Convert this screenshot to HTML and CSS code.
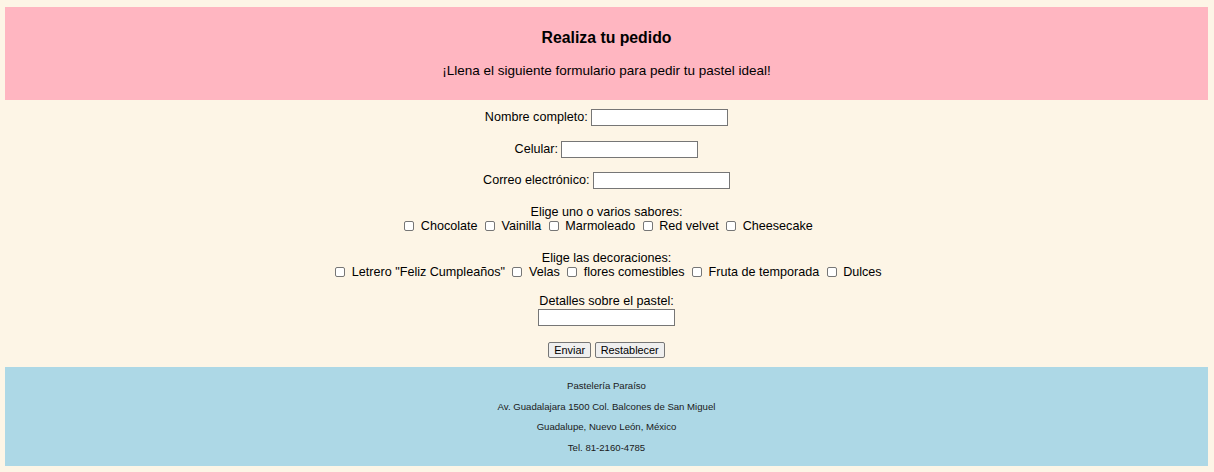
FILE: index.html
```html
<!DOCTYPE html>
<html lang="es">
<head>
<meta charset="utf-8">
<title>Realiza tu pedido</title>
<link rel="stylesheet" href="styles.css">
</head>
<body>
<header class="banner">
  <h3 class="banner-title">Realiza tu pedido</h3>
  <p class="banner-text">¡Llena el siguiente formulario para pedir tu pastel ideal!</p>
</header>
<form class="order">
  <div class="row row-first"><label>Nombre completo:</label> <input class="text" type="text"></div>
  <div class="row"><label>Celular:</label> <input class="text" type="text"></div>
  <div class="row"><label>Correo electrónico:</label> <input class="text" type="text"></div>
  <div class="group group-flavors">
    <div class="group-label">Elige uno o varios sabores:</div>
    <div class="group-options"><input class="check" type="checkbox"> Chocolate <input class="check" type="checkbox"> Vainilla <input class="check" type="checkbox"> Marmoleado <input class="check" type="checkbox"> Red velvet <input class="check" type="checkbox"> Cheesecake</div>
  </div>
  <div class="group group-decor">
    <div class="group-label">Elige las decoraciones:</div>
    <div class="group-options"><input class="check" type="checkbox"> Letrero "Feliz Cumpleaños" <input class="check" type="checkbox"> Velas <input class="check" type="checkbox"> flores comestibles <input class="check" type="checkbox"> Fruta de temporada <input class="check" type="checkbox"> Dulces</div>
  </div>
  <div class="details">
    <div class="group-label">Detalles sobre el pastel:</div>
    <div class="row"><input class="text" type="text"></div>
  </div>
  <div class="row actions"><button class="btn" type="submit">Enviar</button> <button class="btn" type="reset">Restablecer</button></div>
</form>
<footer class="site-footer">
  <p>Pastelería Paraíso</p>
  <p>Av. Guadalajara 1500 Col. Balcones de San Miguel</p>
  <p>Guadalupe, Nuevo León, México</p>
  <p>Tel. 81-2160-4785</p>
</footer>
</body>
</html>
```
FILE: styles.css
```css
html {
  background: #fdf5e6;
}
body {
  margin: 7px 6px 6px 5px;
  background: #fdf5e6;
  font-family: "Liberation Sans", Arial, sans-serif;
  color: #000;
}
.banner {
  background: #ffb6c1;
  text-align: center;
  height: 93px;
  overflow: hidden;
}
.banner-title {
  margin: 22px 0 0;
  font-size: 15.8px;
  line-height: 18px;
  font-weight: bold;
}
.banner-text {
  margin: 16px 0 0;
  font-size: 13.5px;
  line-height: 16px;
}
.order {
  text-align: center;
  font-size: 12.6px;
  line-height: 14px;
  padding: 9px 0 9px;
}
.row {
  height: 17px;
  line-height: 17px;
  margin-top: 14.5px;
}
.row-first {
  margin-top: 0;
}
.text {
  box-sizing: border-box;
  width: 137px;
  height: 17px;
  margin: 0;
  padding: 0 2px;
  border: 1px solid #767676;
  border-radius: 0;
  background: #fff;
  vertical-align: top;
  font: inherit;
}
.group {
  margin-top: 16px;
}
.group-decor {
  margin-top: 18px;
}
.group-label,
.group-options {
  height: 14px;
  line-height: 14px;
}
.check {
  -webkit-appearance: none;
  appearance: none;
  box-sizing: border-box;
  width: 10px;
  height: 10px;
  margin: 0 3px 0 4px;
  border: 1px solid #767676;
  border-radius: 2px;
  background: #fff;
  vertical-align: -1px;
}
.details {
  margin-top: 15px;
}
.details .row {
  margin-top: 1px;
}
.actions {
  margin-top: 15.5px;
  height: 16px;
  line-height: 16px;
}
.btn {
  box-sizing: border-box;
  height: 16px;
  margin: 0;
  padding: 0 5px;
  border: 1px solid #767676;
  border-radius: 2px;
  background: #efefef;
  font-family: "Liberation Sans", Arial, sans-serif;
  font-size: 10.9px;
  line-height: 14px;
  color: #000;
  vertical-align: top;
}
.site-footer {
  background: #add8e6;
  text-align: center;
  font-size: 9.6px;
  line-height: 11px;
  padding: 3.9px 0 2.9px;
  color: #1a1a1a;
}
.site-footer p {
  margin: 9.67px 0;
}
```
